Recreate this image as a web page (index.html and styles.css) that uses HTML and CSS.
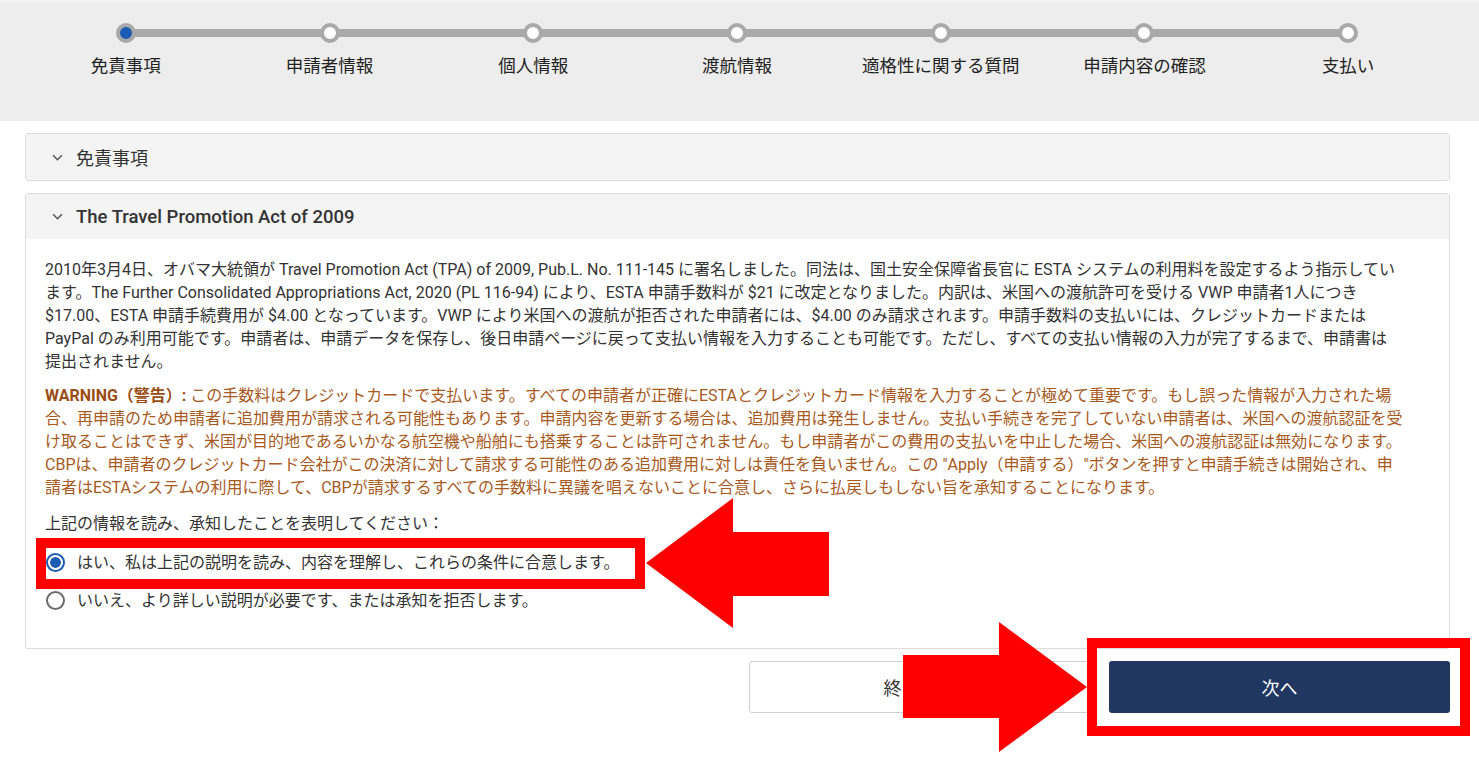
FILE: index.html
```html
<!doctype html>
<html lang="ja">
<head>
    <meta charset="UTF-8">
    <title>ESTA 申請 - 免責事項</title>
    <link rel="stylesheet" href="styles.css">
</head>
<body>
<div class="progress">
    <ol class="steps">
        <li class="step active"><span class="dot"></span><span class="label">免責事項</span></li>
        <li class="step"><span class="dot"></span><span class="label">申請者情報</span></li>
        <li class="step"><span class="dot"></span><span class="label">個人情報</span></li>
        <li class="step"><span class="dot"></span><span class="label">渡航情報</span></li>
        <li class="step"><span class="dot"></span><span class="label">適格性に関する質問</span></li>
        <li class="step"><span class="dot"></span><span class="label">申請内容の確認</span></li>
        <li class="step"><span class="dot"></span><span class="label">支払い</span></li>
    </ol>
</div>

<main class="wrap">
    <section class="panel">
        <div class="panel-head">
            <svg class="chev" viewBox="0 0 10 6"><polyline points="1,1 5,5 9,1"/></svg>
            <span>免責事項</span>
        </div>
    </section>

    <section class="panel">
        <div class="panel-head strong">
            <svg class="chev" viewBox="0 0 10 6"><polyline points="1,1 5,5 9,1"/></svg>
            <span>The Travel Promotion Act of 2009</span>
        </div>
        <div class="panel-body">
            <p>2010年3月4日、オバマ大統領が Travel Promotion Act (TPA) of 2009, Pub.L. No. 111-145 に署名しました。同法は、国土安全保障省長官に ESTA システムの利用料を設定するよう指示してい<br>ます。The Further Consolidated Appropriations Act, 2020 (PL 116-94) により、ESTA 申請手数料が $21 に改定となりました。内訳は、米国への渡航許可を受ける VWP 申請者1人につき<br>$17.00、ESTA 申請手続費用が $4.00 となっています。VWP により米国への渡航が拒否された申請者には、$4.00 のみ請求されます。申請手数料の支払いには、クレジットカードまたは<br>PayPal のみ利用可能です。申請者は、申請データを保存し、後日申請ページに戻って支払い情報を入力することも可能です。ただし、すべての支払い情報の入力が完了するまで、申請書は<br>提出されません。</p>
            <p class="warn"><b>WARNING（警告）:</b> この手数料はクレジットカードで支払います。すべての申請者が正確にESTAとクレジットカード情報を入力することが極めて重要です。もし誤った情報が入力された場<br>合、再申請のため申請者に追加費用が請求される可能性もあります。申請内容を更新する場合は、追加費用は発生しません。支払い手続きを完了していない申請者は、米国への渡航認証を受<br>け取ることはできず、米国が目的地であるいかなる航空機や船舶にも搭乗することは許可されません。もし申請者がこの費用の支払いを中止した場合、米国への渡航認証は無効になります。<br>CBPは、申請者のクレジットカード会社がこの決済に対して請求する可能性のある追加費用に対しは責任を負いません。この "Apply（申請する）"ボタンを押すと申請手続きは開始され、申<br>請者はESTAシステムの利用に際して、CBPが請求するすべての手数料に異議を唱えないことに合意し、さらに払戻しもしない旨を承知することになります。</p>
            <p class="ask">上記の情報を読み、承知したことを表明してください：</p>
            <label class="opt"><span class="radio on"></span>はい、私は上記の説明を読み、内容を理解し、これらの条件に合意します。</label>
            <label class="opt"><span class="radio"></span>いいえ、より詳しい説明が必要です、または承知を拒否します。</label>
        </div>
    </section>

    <div class="actions">
        <button class="btn ghost">終了する</button>
        <button class="btn primary">次へ</button>
    </div>
</main>

<!-- red annotations drawn over the page -->
<div class="mark box1"></div>
<svg class="arrow arrow-left" viewBox="0 0 186 132"><polygon points="1,66 88,1 88,35 184,35 184,99 88,99 88,131"/></svg>
<svg class="arrow arrow-right" viewBox="0 0 186 132"><polygon points="0,34 96,34 96,1 184,66 96,131 96,97 0,97"/></svg>
<div class="mark box2"></div>
</body>
</html>
```

FILE: styles.css
```css
*{
    margin: 0;
    padding: 0;
    box-sizing: border-box;
}
html, body{
    width: 100%;
    height: 100%;
}
body{
    position: relative;
    background: #fff;
    color: #333;
    font-family: "Roboto", "Noto Sans CJK JP", sans-serif;
    overflow: hidden;
}

/* progress bar */
.progress{
    height: 121px;
    padding-top: 21px;
    background: #ededed;
    border-top: 2px solid #f4f4f4;
}
.steps{
    display: grid;
    grid-template-columns: repeat(7, 1fr);
    width: 1426px;
    margin-left: 24px;
    list-style: none;
}
.step{
    position: relative;
    display: flex;
    flex-direction: column;
    align-items: center;
}
.step::after{
    content: "";
    position: absolute;
    left: 50%;
    top: 6px;
    width: 100%;
    height: 8px;
    background: #a9a9a9;
}
.step:last-child::after{
    display: none;
}
.dot{
    position: relative;
    z-index: 1;
    width: 20px;
    height: 20px;
    border: 4px solid #a9a9a9;
    border-radius: 50%;
    background: #fff;
}
.step.active .dot{
    background: #1c5cb4;
}
.label{
    margin-top: 11px;
    font-size: 17.5px;
    line-height: 24px;
    color: #222;
}

/* panels */
.wrap{
    width: 1425px;
    margin: 12px 0 0 25px;
}
.panel{
    border: 1px solid #dcdcdc;
    border-radius: 3px;
    margin-bottom: 12px;
    background: #fff;
}
.panel-head{
    display: flex;
    align-items: center;
    gap: 13px;
    height: 46px;
    padding-left: 26px;
    background: #f4f4f4;
    font-size: 18px;
    color: #333;
}
.panel-head.strong{
    font-weight: 500;
    font-size: 18.5px;
    height: 45px;
}
.chev{
    width: 11px;
    height: 7px;
    fill: none;
    stroke: #555;
    stroke-width: 1.4;
}
.panel-body{
    padding: 19px 20px 29px 19px;
    font-size: 16px;
    line-height: 23px;
}
.panel-body p{
    margin-bottom: 11px;
}
.panel-body p.warn{
    color: #a8591d;
    margin-bottom: 13px;
}
.warn b{
    color: #9a4c14;
    font-weight: 700;
}
.panel-body p.ask{
    margin-bottom: 8px;
}
.opt{
    display: flex;
    align-items: center;
    gap: 12px;
    height: 38px;
    padding-left: 1px;
}
.radio{
    width: 19px;
    height: 19px;
    border: 2px solid #6b6b6b;
    border-radius: 50%;
    background: #fff;
    flex: none;
}
.radio.on{
    border-color: #1c5cb4;
    background: radial-gradient(circle, #1c5cb4 0 5px, #fff 5.6px);
}

/* buttons */
.actions{
    display: flex;
    justify-content: flex-end;
    gap: 19px;
    margin-top: 2px;
}
.btn{
    width: 341px;
    height: 52px;
    border-radius: 3px;
    font-family: "Roboto", "Noto Sans CJK JP", sans-serif;
    font-size: 18px;
}
.btn.ghost{
    background: #fff;
    border: 1px solid #cfcfcf;
    color: #333;
}
.btn.primary{
    background: #1f3761;
    border: none;
    color: #fff;
}

/* red annotations */
.mark{
    position: absolute;
    border: 10px solid #ff0000;
}
.box1{
    left: 36px;
    top: 538px;
    width: 609px;
    height: 51px;
}
.box2{
    left: 1087px;
    top: 638px;
    width: 383px;
    height: 98px;
}
.arrow{
    position: absolute;
    width: 186px;
    height: 132px;
    fill: #ff0000;
}
.arrow-left{
    left: 645px;
    top: 497px;
}
.arrow-right{
    left: 903px;
    top: 621px;
}
```
